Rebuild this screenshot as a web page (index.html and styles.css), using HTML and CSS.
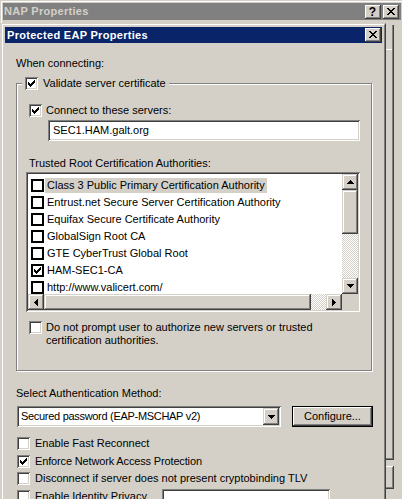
FILE: index.html
```html
<!DOCTYPE html>
<html>
<head>
<meta charset="utf-8">
<title>Protected EAP Properties</title>
<link rel="stylesheet" href="styles.css">
</head>
<body>
<div class="nap">
  <div class="nap-title">
    <span class="nap-title-text">NAP Properties</span>
    <span class="cap-btns">
      <span class="cap-btn help">?</span>
      <span class="cap-btn"><svg width="8" height="7" viewBox="0 0 8 7"><path d="M0 0h2v1h-2zM6 0h2v1h-2zM1 1h2v1h-2zM5 1h2v1h-2zM2 2h4v1h-4zM3 3h2v1h-2zM2 4h4v1h-4zM1 5h2v1h-2zM5 5h2v1h-2zM0 6h2v1h-2zM6 6h2v1h-2z" fill="#000"/></svg></span>
    </span>
  </div>
  <div class="nap-body">
    <div class="nap-page">
      <div class="nap-inner"></div>
    </div>
    <div class="nap-btn"></div>
  </div>
</div>

<div class="dlg">
  <div class="dlg-inner">
    <div class="dlg-title">
      <span class="dlg-title-text">Protected EAP Properties</span>
      <span class="cap-btn"><svg width="8" height="7" viewBox="0 0 8 7"><path d="M0 0h2v1h-2zM6 0h2v1h-2zM1 1h2v1h-2zM5 1h2v1h-2zM2 2h4v1h-4zM3 3h2v1h-2zM2 4h4v1h-4zM1 5h2v1h-2zM5 5h2v1h-2zM0 6h2v1h-2zM6 6h2v1h-2z" fill="#000"/></svg></span>
    </div>
    <div class="dlg-body">
      <div class="label when">When connecting:</div>
      <div class="group">
        <div class="legend"><span class="chk on"></span><span>Validate server certificate</span></div>
        <div class="crow connect"><span class="chk on"></span><span>Connect to these servers:</span></div>
        <div class="field servers">SEC1.HAM.galt.org</div>
        <div class="label trusted">Trusted Root Certification Authorities:</div>
        <div class="list">
          <div class="list-items">
            <div class="item"><span class="fchk"></span><span class="item-text sel">Class 3 Public Primary Certification Authority</span></div>
            <div class="item"><span class="fchk"></span><span class="item-text">Entrust.net Secure Server Certification Authority</span></div>
            <div class="item"><span class="fchk"></span><span class="item-text">Equifax Secure Certificate Authority</span></div>
            <div class="item"><span class="fchk"></span><span class="item-text">GlobalSign Root CA</span></div>
            <div class="item"><span class="fchk"></span><span class="item-text">GTE CyberTrust Global Root</span></div>
            <div class="item"><span class="fchk on"></span><span class="item-text">HAM-SEC1-CA</span></div>
            <div class="item"><span class="fchk"></span><span class="item-text">http://www.valicert.com/</span></div>
          </div>
          <div class="vscroll">
            <span class="sbtn"><svg width="7" height="4" viewBox="0 0 7 4"><path d="M3 0h1v1h-1zM2 1h3v1h-3zM1 2h5v1h-5zM0 3h7v1h-7z" fill="#000"/></svg></span>
            <span class="thumb vthumb"></span>
            <span class="track"></span>
            <span class="sbtn"><svg width="7" height="4" viewBox="0 0 7 4"><path d="M0 0h7v1h-7zM1 1h5v1h-5zM2 2h3v1h-3zM3 3h1v1h-1z" fill="#000"/></svg></span>
          </div>
          <div class="hscroll">
            <span class="sbtn"><svg width="4" height="7" viewBox="0 0 4 7"><path d="M3 0h1v7h-1zM2 1h1v5h-1zM1 2h1v3h-1zM0 3h1v1h-1z" fill="#000"/></svg></span>
            <span class="thumb hthumb"></span>
            <span class="track"></span>
            <span class="sbtn"><svg width="4" height="7" viewBox="0 0 4 7"><path d="M0 0h1v7h-1zM1 1h1v5h-1zM2 2h1v3h-1zM3 3h1v1h-1z" fill="#000"/></svg></span>
          </div>
          <div class="corner"></div>
        </div>
        <div class="crow prompt"><span class="chk"></span><span>Do not prompt user to authorize new servers or trusted<br>certification authorities.</span></div>
      </div>
      <div class="label method">Select Authentication Method:</div>
      <div class="method-row">
        <div class="combo">
          <span class="combo-text">Secured password (EAP-MSCHAP v2)</span>
          <span class="sbtn combo-btn"><svg width="7" height="4" viewBox="0 0 7 4"><path d="M0 0h7v1h-7zM1 1h5v1h-5zM2 2h3v1h-3zM3 3h1v1h-1z" fill="#000"/></svg></span>
        </div>
        <div class="btn default"><span class="btn-face">Configure...</span></div>
      </div>
      <div class="options">
        <div class="crow opt"><span class="chk"></span><span>Enable Fast Reconnect</span></div>
        <div class="crow opt r2"><span class="chk on"></span><span class="tight">Enforce Network Access Protection</span></div>
        <div class="crow opt r3"><span class="chk"></span><span>Disconnect if server does not present cryptobinding TLV</span></div>
        <div class="crow opt r4"><span class="chk"></span><span class="id-label">Enable Identity Privacy</span><span class="field id-field"></span></div>
      </div>
    </div>
  </div>
</div>
</body>
</html>
```

FILE: styles.css
```css
html, body {
  margin: 0;
  padding: 0;
  width: 402px;
  height: 499px;
  overflow: hidden;
  background: #d4d0c8;
}
body {
  font-family: "Liberation Sans", Arial, sans-serif;
  font-size: 11px;
  line-height: 13px;
  color: #000;
  position: relative;
}

/* ---------- outer NAP window ---------- */
.nap {
  width: 404px;
  height: 520px;
  box-sizing: border-box;
  border-top: 1px solid #d4d0c8;
  border-left: 1px solid #d4d0c8;
  box-shadow: inset 1px 1px 0 #fff;
  padding: 2px 3px 0 2px;
}
.nap-title {
  height: 17px;
  background: #808080;
  display: flex;
  align-items: flex-start;
  justify-content: space-between;
  padding-right: 2px;
}
.nap-title-text {
  color: #d4d0c8;
  font-weight: bold;
  letter-spacing: 0.3px;
  line-height: 17px;
  padding-left: 1px;
}
.cap-btns {
  display: flex;
  gap: 2px;
  margin-top: 2px;
}
.cap-btn {
  width: 16px;
  height: 14px;
  box-sizing: border-box;
  background: #d4d0c8;
  box-shadow: inset -1px -1px 0 #404040, inset 1px 1px 0 #fff, inset -2px -2px 0 #808080;
  display: flex;
  align-items: center;
  justify-content: center;
  padding-bottom: 1px;
}
.cap-btn.help {
  font-weight: bold;
  font-size: 12px;
  line-height: 14px;
  padding: 0 1px 0 0;
}
.nap-body {
  padding: 5px 0 0 4px;
}
.nap-page {
  width: 387px;
  height: 435px;
  box-sizing: border-box;
  border-right: 1px solid #404040;
  border-bottom: 1px solid #404040;
  box-shadow: inset -1px -1px 0 #808080;
  padding-top: 24px;
}
.nap-inner {
  height: 410px;
  border-top: 1px solid #fff;
  margin-right: 1px;
}
.nap-btn {
  width: 75px;
  height: 23px;
  margin: 6px 0 0 312px;
  box-shadow: inset -1px -1px 0 #404040, inset 1px 1px 0 #fff, inset -2px -2px 0 #808080;
}

/* ---------- Protected EAP dialog ---------- */
.dlg {
  position: absolute;
  left: 1px;
  top: 23px;
  width: 385px;
  height: 500px;
  box-sizing: border-box;
  background: #d4d0c8;
  border: 1px solid;
  border-color: #d4d0c8 #404040 #404040 #d4d0c8;
}
.dlg-inner {
  height: 100%;
  box-sizing: border-box;
  border: 1px solid;
  border-color: #fff #808080 #808080 #fff;
  padding: 2px;
}
.dlg-title {
  height: 16px;
  background: #0a246a;
  display: flex;
  justify-content: space-between;
  align-items: flex-start;
  padding-right: 1px;
}
.dlg-title-text {
  color: #fff;
  font-weight: bold;
  letter-spacing: 0.3px;
  line-height: 16px;
  padding-left: 2px;
}
.dlg-title .cap-btn {
  margin-top: 1px;
}
.dlg-body {
  padding-left: 11px;
  display: flex;
  flex-direction: column;
  align-items: flex-start;
}
.label {
  white-space: nowrap;
}
.when {
  margin-top: 14px;
}

/* group box */
.group {
  margin-top: 13px;
  width: 356px;
  box-sizing: border-box;
  border: 1px solid #808080;
  box-shadow: 1px 1px 0 #fff, inset 1px 1px 0 #fff;
  padding-bottom: 23px;
  display: flex;
  flex-direction: column;
  align-items: flex-start;
}
.legend {
  margin: -7px 0 0 5px;
  padding: 0 3px;
  background: #d4d0c8;
  display: flex;
  gap: 5px;
  white-space: nowrap;
}

/* checkbox */
.chk {
  flex: none;
  width: 13px;
  height: 13px;
  box-sizing: border-box;
  background: #fff;
  box-shadow: inset 1px 1px 0 #808080, inset -1px -1px 0 #fff, inset 2px 2px 0 #404040, inset -2px -2px 0 #d4d0c8;
  position: relative;
}
.chk.on::after, .fchk.on::after {
  content: "";
  position: absolute;
  left: 3px;
  top: 3px;
  width: 7px;
  height: 7px;
  background: url("data:image/svg+xml;utf8,<svg xmlns='http://www.w3.org/2000/svg' width='7' height='7' viewBox='0 0 7 7'><path d='M6 0h1v1h-1zM5 1h2v1h-2zM0 2h1v1h-1zM4 2h3v1h-3zM0 3h2v1h-2zM3 3h3v1h-3zM0 4h5v1h-5zM1 5h3v1h-3zM2 6h1v1h-1z' fill='black'/></svg>") no-repeat;
}
.crow {
  display: flex;
  gap: 4px;
  white-space: nowrap;
}
.connect {
  margin: 14px 0 0 12px;
}
.field {
  background: #fff;
  box-sizing: border-box;
  box-shadow: inset 1px 1px 0 #808080, inset -1px -1px 0 #fff, inset 2px 2px 0 #404040, inset -2px -2px 0 #d4d0c8;
}
.servers {
  margin: 3px 0 0 31px;
  width: 312px;
  height: 21px;
  line-height: 21px;
  padding-left: 5px;
}
.trusted {
  margin: 16px 0 0 12px;
}

/* list */
.list {
  margin: 2px 0 0 9px;
  width: 334px;
  height: 140px;
  box-sizing: border-box;
  padding: 2px;
  background: #fff;
  box-shadow: inset 1px 1px 0 #808080, inset -1px -1px 0 #fff, inset 2px 2px 0 #404040, inset -2px -2px 0 #d4d0c8;
  display: grid;
  grid-template-columns: 1fr 16px;
  grid-template-rows: 1fr 16px;
}
.list-items {
  overflow: hidden;
  padding-top: 3px;
}
.item {
  height: 17px;
  display: flex;
  align-items: flex-start;
  white-space: nowrap;
}
.fchk {
  flex: none;
  width: 13px;
  height: 13px;
  box-sizing: border-box;
  border: 2px solid #000;
  background: #fff;
  margin: 2px 1px 0 3px;
  position: relative;
}
.fchk.on::after {
  left: 1px;
  top: 1px;
}
.item-text {
  margin-top: 1px;
  line-height: 15px;
  padding: 0 2px 0 2px;
}
.item-text.sel {
  background: #d4d0c8;
}
.sbtn {
  flex: none;
  width: 16px;
  height: 16px;
  box-sizing: border-box;
  background: #d4d0c8;
  box-shadow: inset -1px -1px 0 #404040, inset 1px 1px 0 #d4d0c8, inset -2px -2px 0 #808080, inset 2px 2px 0 #fff;
  display: flex;
  align-items: center;
  justify-content: center;
}
.vscroll {
  display: flex;
  flex-direction: column;
}
.hscroll {
  display: flex;
}
.thumb {
  flex: none;
  background: #d4d0c8;
  box-shadow: inset -1px -1px 0 #404040, inset 1px 1px 0 #d4d0c8, inset -2px -2px 0 #808080, inset 2px 2px 0 #fff;
}
.vthumb {
  height: 44px;
}
.hthumb {
  width: 267px;
}
.track {
  flex: 1;
  background: repeating-conic-gradient(#fff 0% 25%, #d4d0c8 0% 50%) 0 0 / 2px 2px;
}
.corner {
  background: #d4d0c8;
}
.prompt {
  margin: 9px 0 0 12px;
}

/* method */
.method {
  margin-top: 16px;
}
.method-row {
  margin-top: 6px;
  display: flex;
}
.combo {
  margin-left: 1px;
  width: 264px;
  height: 21px;
  box-sizing: border-box;
  padding: 2px;
  background: #fff;
  box-shadow: inset 1px 1px 0 #808080, inset -1px -1px 0 #fff, inset 2px 2px 0 #404040, inset -2px -2px 0 #d4d0c8;
  display: flex;
}
.combo-text {
  flex: 1;
  padding-left: 2px;
  line-height: 17px;
  white-space: nowrap;
  letter-spacing: -0.3px;
}
.combo-btn {
  height: 17px;
  box-shadow: inset -1px -1px 0 #404040, inset 1px 1px 0 #d4d0c8, inset -2px -2px 0 #808080, inset 2px 2px 0 #fff;
}
.btn {
  margin-left: 11px;
  width: 81px;
  height: 21px;
  box-sizing: border-box;
  border: 1px solid #000;
  display: flex;
}
.btn-face {
  flex: 1;
  display: flex;
  align-items: center;
  justify-content: center;
  box-shadow: inset -1px -1px 0 #404040, inset 1px 1px 0 #fff, inset -2px -2px 0 #808080;
}

/* options */
.options {
  margin: 10px 0 0 1px;
  display: flex;
  flex-direction: column;
  align-items: flex-start;
}
.opt {
  gap: 5px;
}
.tight {
  letter-spacing: -0.15px;
}
.r2 { margin-top: 5px; }
.r3 { margin-top: 4px; }
.r4 { margin-top: 5px; }
.id-label {
  width: 122px;
}
.id-field {
  width: 168px;
  height: 21px;
  margin-top: -1px;
}
```
